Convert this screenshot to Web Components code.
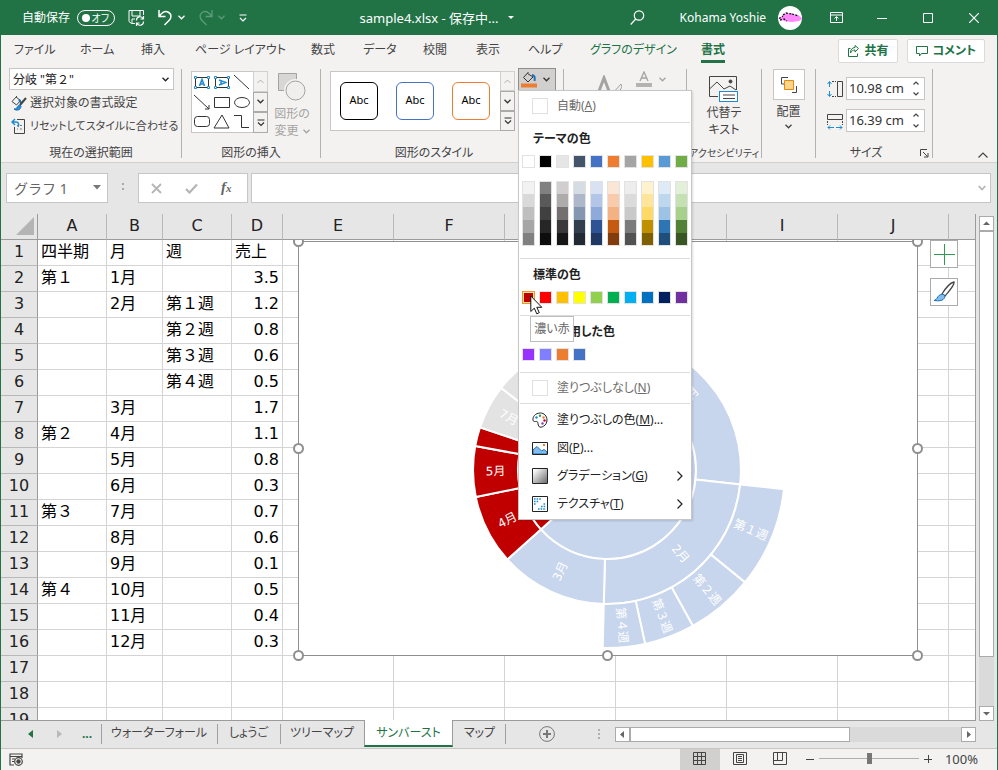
<!DOCTYPE html>
<html lang="ja">
<head>
<meta charset="utf-8">
<title>sample4.xlsx - Excel</title>
<style>
  html, body { height: 100%; margin: 0; }
  body {
    font-family: "Noto Sans", "Noto Sans CJK JP", sans-serif;
    font-size: 13px; line-height: 18px; color: #444;
    font-feature-settings: "palt";
    --green: #217346; --face: #f3f2f1; --band: #e6e6e6; --rule: #c6c6c6; --line: #9b9b9b;
    overflow: hidden;
  }
</style>
</head>
<body>
<excel-window></excel-window>

<script>
const BASE = `
  *, *::before, *::after { box-sizing: border-box; }
  button, input, select { font: inherit; font-feature-settings: inherit; color: inherit; margin: 0; padding: 0; border: 0; background: none; border-radius: 0; outline: 0; appearance: none; min-width: 0; }
  a { color: inherit; text-decoration: none; }
  svg { display: block; flex: none; fill: none; stroke: currentColor; }
`;
const component = (name, css, html, setup) => {
  const template = document.createElement('template');
  template.innerHTML = `<style>${BASE}${css}</style>${typeof html === 'string' ? html : ''}`;
  customElements.define(name, class extends HTMLElement {
    connectedCallback() {
      if (this.shadowRoot) return;
      const root = this.attachShadow({ mode: 'open' });
      root.append(template.content.cloneNode(true));
      if (typeof html === 'function') root.innerHTML += html(this);
      if (setup) setup(this, root);
    }
  });
};
const chevron = (w = 7) => `<svg width="${w}" height="5" viewBox="0 0 7 5" stroke-width="1.3"><path d="M.5 .8 3.5 3.8 6.5 .8"/></svg>`;

/* ---------- title bar ---------- */
component('title-bar', `
  :host { display: flex; align-items: center; height: 35px; flex: none; background: var(--green); color: #fff; padding-left: 21px; }
  .quick { display: flex; align-items: center; flex: 335; min-width: 0; font-size: 12px; }
  .quick > * { flex: none; }
  .switch { display: flex; align-items: center; width: 38px; height: 16px; border: 1px solid #fff; border-radius: 8px; margin: 0 13px 0 7px; padding: 0 5px 0 4px; font-size: 10px; line-height: 14px; justify-content: space-between; }
  .switch i { width: 8px; height: 8px; border-radius: 4px; background: #fff; }
  .off { color: #5d9b7a; }
  button { display: flex; align-items: center; justify-content: center; }
  .name { flex: 268; display: flex; align-items: center; gap: 9px; white-space: nowrap; font-feature-settings: normal; }
  .user { display: flex; align-items: center; gap: 12px; white-space: nowrap; margin-right: 11px; flex: none; font-size: 12px; }
  .user svg { stroke: none; }
  .win button { width: 46px; height: 35px; }
  .win { display: flex; flex: none; }
  .find { margin-right: 35px; flex: none; }
`, `
  <div class="quick">
    <span id="auto">自動保存</span>
    <button class="switch" role="switch" aria-checked="false" aria-labelledby="auto"><i></i>オフ</button>
    <button aria-label="保存"><svg width="17" height="17" viewBox="0 0 17 17"><path d="M7 14.500H3.500L1 12.500V1.500H15.500V6M4 1.500V7H12V1.500M4 14.500V10H7"/><path d="M8.500 11.500a3.500 3.500 0 0 1 6.500-2M15.500 7v3h-3M15.500 12.500a3.500 3.500 0 0 1-6.500 2M8.500 17v-3h3" stroke-width="1.200"/></svg></button>
    <button aria-label="元に戻す" style="margin-left:12px"><svg width="17" height="17" viewBox="0 0 17 17" stroke-width="1.500"><path d="M2 1V7.500H8.500M2.500 7C5 3.500 8 1.500 11 3c4 2 3.500 6 1 8.500L7.500 16"/></svg></button>
    <button aria-label="元に戻すの一覧" style="margin-left:4px">${chevron()}</button>
    <button class="off" aria-label="やり直し" style="margin-left:12px"><svg width="17" height="17" viewBox="0 0 17 17" stroke-width="1.300"><path d="M15 1V7.500H8.500M14.500 7C12 3.500 9 1.500 6 3c-4 2-3.500 6-1 8.500L9.500 16"/></svg></button>
    <button class="off" aria-label="やり直しの一覧" style="margin-left:4px">${chevron()}</button>
    <button aria-label="クイック アクセスのカスタマイズ" style="margin-left:14px"><svg width="8" height="8" viewBox="0 0 8 8" stroke-width="1.200"><path d="M.5 1H7.500M1 4l3 3 3-3"/></svg></button>
  </div>
  <div class="name"><span>sample4.xlsx - 保存中...</span><svg width="6" height="4" viewBox="0 0 6 4"><path d="M0 0H6L3 3z" fill="#fff" stroke="none"/></svg></div>
  <button class="find" aria-label="検索"><svg width="15" height="16" viewBox="0 0 15 16" stroke-width="1.200"><circle cx="9" cy="5.500" r="4.700"/><path d="M5.700 9 .7 14.500"/></svg></button>
  <div class="user"><span>Kohama Yoshie</span>
    <svg width="24" height="24" viewBox="0 0 24 24"><circle cx="12" cy="12" r="12" fill="#fff"/><path d="M1 12l4-2 1-2 3-1 5 1 5 1 4 2 1 2-3 2-7 1-8-1z" fill="#f8f"/><path d="M1 12.500l4-2.500M5 9l3-2 6 1M2 14l4-1 3 2M14 8l7 2" stroke="#111" stroke-width="1.300" stroke-dasharray="2 1.500"/></svg></div>
  <div class="win">
    <button aria-label="リボンの表示オプション"><svg width="13" height="11" viewBox="0 0 13 11"><path d="M.5 .5H12.500V10.500H.5zM.5 3H12.500M6.500 9V5M4.500 6.500l2-2 2 2"/></svg></button>
    <button aria-label="最小化"><svg width="10" height="10" viewBox="0 0 10 10"><path d="M0 5.500H10"/></svg></button>
    <button aria-label="最大化"><svg width="10" height="10" viewBox="0 0 10 10"><path d="M.5 .5H9.500V9.500H.5z"/></svg></button>
    <button aria-label="閉じる"><svg width="10" height="10" viewBox="0 0 10 10" stroke-width="1.200"><path d="M0 0 10 10M10 0 0 10"/></svg></button>
  </div>
`);

/* ---------- ribbon tabs ---------- */
component('ribbon-tabs', `
  :host { display: flex; justify-content: space-between; height: 31px; flex: none; background: var(--face); padding: 0 12px 0 13px; font-size: 12px; }
  nav { display: grid; grid-template-columns: 66px 61px 54px 116px 52px 60px 53px 52px 62px 111px auto; white-space: nowrap; align-items: start; }
  a { height: 28px; line-height: 29px; justify-self: start; }
  .ctx { color: var(--green); }
  .on { color: var(--green); font-weight: 700; border-bottom: 3px solid var(--green); }
  .acts { display: flex; gap: 9px; align-items: center; }
  button { display: flex; align-items: center; justify-content: center; gap: 5px; height: 24px; padding: 0 8px; background: #fff; border: 1px solid #dcdad8; border-radius: 2px; color: var(--green); font-weight: 700; white-space: nowrap; }
`, `
  <nav><a href="#">ファイル</a><a href="#">ホーム</a><a href="#">挿入</a><a href="#">ページ レイアウト</a><a href="#">数式</a><a href="#">データ</a><a href="#">校閲</a><a href="#">表示</a><a href="#">ヘルプ</a><a href="#" class="ctx">グラフのデザイン</a><a href="#" class="on">書式</a></nav>
  <div class="acts">
    <button><svg width="13" height="13" viewBox="0 0 13 13"><path d="M3.500 4.500H1.500V12.500H10.500V9.500M8 1.500l3.500 3L8 8V6C6 6 4.500 7 3.500 9 3.500 6 5 3.500 8 3.500z"/></svg>共有</button>
    <button><svg width="12" height="12" viewBox="0 0 12 12"><path d="M.5 1.500H11.500V8.500H5.500L3.500 11V8.500H.5z"/></svg>コメント</button>
  </div>
`);

/* ---------- ribbon ---------- */
component('ribbon-group', `
  :host { display: flex; flex-direction: column; flex: none; height: 89px; position: relative; border-right: 1px solid #b4b2b0; }
  .body { height: 76px; display: flex; }
  .label { position: relative; text-align: center; white-space: nowrap; line-height: 16px; height: 13px; padding-right: var(--shift, 0px); }
  :host([compact]) .label { font-size: 10px; }
  svg { position: absolute; right: 3px; top: 4px; }
`, host => `<div class="body"><slot></slot></div><div class="label">${host.getAttribute('label') || ''}${host.hasAttribute('launcher') ? '<svg width="9" height="9" viewBox="0 0 9 9" stroke-width="1"><path d="M.5 7V.5H7M3 3l4.500 4.500M8 4V8H4"/></svg>' : ''}</div>`);

component('gallery-scroll', `
  :host { display: grid; grid-template-rows: 1fr 1fr 1fr; width: 15px; color: #333; }
  button { display: grid; place-items: center; border: 1px solid #ababab; background: #f3f2f1; }
  .off { border-color: #d2d0ce; color: #b1b1b1; }
`, `
  <button class="off" aria-label="前へ"><svg width="7" height="5" viewBox="0 0 7 5"><path d="M.5 4 3.500 1 6.500 4"/></svg></button>
  <button aria-label="次へ">${chevron()}</button>
  <button aria-label="その他"><svg width="8" height="8" viewBox="0 0 8 8" stroke-width="1.200"><path d="M.5 1H7.500M1 3.500l3 3 3-3"/></svg></button>
`);

component('style-swatch', `
  :host { display: block; width: 38px; height: 38px; }
  button { width: 100%; height: 100%; border: 1px solid var(--edge); border-radius: 6px; background: #fff; color: #000; font-size: 11px; padding-bottom: 3px; }
`, `<button><slot></slot></button>`);

component('size-field', `
  :host { display: flex; align-items: center; gap: 3px; }
  .box { display: flex; width: 79px; height: 23px; background: #fff; border: 1px solid #c8c6c4; }
  input { flex: 1; width: 0; padding-left: 2px; color: #333; font-size: 13px; }
  .spin { display: flex; flex-direction: column; width: 16px; color: #444; }
  .spin button { flex: 1; display: grid; place-items: center; }
`, host => `<slot></slot><div class="box"><input aria-label="${host.getAttribute('name')}" value="${host.getAttribute('value')}"><div class="spin"><button aria-label="増やす"><svg width="6" height="4" viewBox="0 0 6 4" stroke-width="1.200"><path d="M.5 3.500 3 1 5.500 3.500"/></svg></button><button aria-label="減らす"><svg width="6" height="4" viewBox="0 0 6 4" stroke-width="1.200"><path d="M.5 .5 3 3 5.500 .5"/></svg></button></div></div>`);

component('ribbon-bar', `
  :host { display: flex; height: 97px; flex: none; padding-top: 3px; background: var(--face); border-bottom: 1px solid #d2d0ce; font-size: 12px; line-height: 17px; }
  button { white-space: nowrap; }
  .sel { display: flex; flex-direction: column; padding-left: 8px; flex: 1; }
  .combo { display: flex; align-items: center; width: 165px; height: 22px; margin-top: -1px; background: #fff; border: 1px solid #c8c6c4; color: #222; font-feature-settings: normal; }
  .combo select { flex: 1; height: 20px; padding-left: 3px; }
  .combo svg { margin-left: -12px; margin-right: 4px; pointer-events: none; }
  .cmd { display: flex; align-items: center; gap: 3px; height: 23px; padding-left: 2px; }
  .cmd:last-child { font-size: 11px; }
  .cmd:nth-child(2) { margin-top: 1px; }
  .shapes { display: flex; margin: 2px 0 0 9px; height: 62px; background: #fff; border: 1px solid #c8c6c4; border-right: 0; }
  .shapes gallery-scroll, .styles gallery-scroll { margin: -1px 0; }
  .tall { display: flex; flex-direction: column; align-items: center; }
  .tall .v { margin-top: 3px; }
  .v svg { display: inline-block; vertical-align: middle; margin-left: 4px; }
  .styles { display: flex; margin: 2px 0 0 9px; height: 60px; background: #fff; border: 1px solid #c8c6c4; border-right: 0; }
  .styles .row { display: flex; gap: 18px; padding: 10px 10px 0 9px; }
  .fill { position: relative; margin: -1px 0 0 3px; height: 23px; }
  .fill > button { display: flex; align-items: center; gap: 5px; width: 38px; height: 23px; padding-left: 2px; background: #d2d0ce; border: 1px solid #8f8d8b; color: #333; }
  fill-menu { position: absolute; left: 0; top: 22px; z-index: 20; }
  .sizes { display: flex; flex-direction: column; gap: 9px; padding: 8px 0 0 11px; }
  .arr { display: grid; place-items: center; width: 32px; height: 31px; background: #fff; border: 1px solid #c8c6c4; }
  .rest { flex: 1; display: flex; justify-content: flex-end; align-items: flex-end; padding: 0 9px 4px 0; }
  .dim { color: #a5a3a1; }
`, `
  <ribbon-group label="現在の選択範囲" style="width:181px">
    <div class="sel">
      <div class="combo"><select aria-label="グラフ要素"><option>分岐 "第２"</option></select>${chevron()}</div>
      <button class="cmd"><svg width="16" height="16" viewBox="0 0 16 16"><path d="M6 1 1 6.500 5.500 10 9.500 5.500 5 2"/><path d="M8 4.500l2.500 4" stroke="#1e6fb8" stroke-width="2"/><path d="M15 3 9 10" stroke-width="2"/><path d="M9 10c-3 0-2 4-6 4 2 2 7 1.500 7-3z" fill="#2a8dd4" stroke="#1e6fb8"/></svg>選択対象の書式設定</button>
      <button class="cmd"><svg width="16" height="16" viewBox="0 0 16 16"><path d="M6 1.500H13.500V15.500H3.500V9"/><path d="M6 7.500h1M9 7.500h2M6 11h1M9 11h2" stroke="#777"/><path d="M4 1 1 4 4 7M1 4H5C8 4 8 7 7 9" stroke="#1e8bd0" stroke-width="1.500"/></svg>リセットしてスタイルに合わせる</button>
    </div>
  </ribbon-group>
  <ribbon-group label="図形の挿入" style="width:139px">
    <div class="shapes">
      <svg width="61" height="60" viewBox="0 0 61 60" style="color:#333"><path d="M3.500 5.500H16.500V15.500H3.500zM23.500 5.500H36.500V15.500H23.500zM42 3 57 17M2 23 17 37M17 33v4h-4M22.500 25.500H37.500V35.500H22.500zM22 56 30 43 37 56zM42 43.500H49.500V55.500H57"/><ellipse cx="50" cy="30.500" rx="7.500" ry="5"/><rect x="2.500" y="44.500" width="15" height="10" rx="3"/><g fill="#fff" stroke="#1e8bd0"><path d="M2.500 4.500h2v2h-2zM15.500 4.500h2v2h-2zM2.500 14.500h2v2h-2zM15.500 14.500h2v2h-2zM22.500 4.500h2v2h-2zM35.500 4.500h2v2h-2zM22.500 14.500h2v2h-2zM35.500 14.500h2v2h-2z"/></g><path d="M7.500 14 10 7.500 12.500 14M8.500 12h3M27 8 33.500 10.500 27 13M29 9v3" stroke="#1e8bd0" stroke-width="1.600"/></svg>
      <gallery-scroll></gallery-scroll>
    </div>
    <button class="tall dim" style="width:48px"><svg width="30" height="30" viewBox="0 0 30 30" style="margin-top:3px"><path d="M1.500 1.500H19.500V18.500H1.500z" fill="#d8d6d4"/><circle cx="18.500" cy="18.500" r="10.500" stroke="#f3f2f1" stroke-width="2"/><circle cx="18.500" cy="18.500" r="9.500" fill="#f0efee"/></svg><span class="v">図形の<br>変更${chevron()}</span></button>
  </ribbon-group>
  <ribbon-group label="図形のスタイル" style="width:243px;--shift:16px">
    <div class="styles">
      <div class="row"><style-swatch style="--edge:#000">Abc</style-swatch><style-swatch style="--edge:#4472c4">Abc</style-swatch><style-swatch style="--edge:#ed7d31">Abc</style-swatch></div>
      <gallery-scroll></gallery-scroll>
    </div>
    <div class="fill">
      <button aria-label="図形の塗りつぶし" aria-expanded="true"><svg width="17" height="17" viewBox="0 0 17 17"><path d="M7.500 1 2.500 6.500 7 11 12 6 6.500 2.500"/><path d="M11 4c3 0 3 3 2.500 6" stroke="#1e6fb8" stroke-width="2"/><path d="M0 12.500H16V16.500H0z" fill="#ed7d31" stroke="none"/></svg>${chevron()}</button>
      <fill-menu></fill-menu>
    </div>
  </ribbon-group>
  <ribbon-group label="" style="width:123px">
    <svg width="27" height="31" viewBox="0 0 27 31" class="dim" style="margin:6px 0 0 31px"><path d="M1 24 9 3 17 24M4 17h10" stroke-width="3"/><path d="M26 9 16 20l-2 6 5-1 8-13z" fill="#eee"/></svg>
    <svg width="16" height="16" viewBox="0 0 16 16" class="dim" style="margin:2px 0 0 14px"><path d="M4 10 8 1 12 10M5.500 7h5" stroke-width="1.300"/><path d="M0 12H16V16H0z" fill="#b5b3b1" stroke="none"/></svg>
    <span class="dim" style="margin:8px 0 0 7px">${chevron()}</span>
  </ribbon-group>
  <ribbon-group label="アクセシビリティ" compact style="width:75px">
    <button class="tall" style="flex:1"><svg width="32" height="28" viewBox="0 0 32 28" style="margin-top:6px"><path d="M10 21.500H1.500V1.500H28.500V15M2 13.500 9 7l7 7 6-3 6 4" /><circle cx="22.500" cy="6.500" r="1.500" fill="#444"/><rect x="11.500" y="16.500" width="18" height="10" fill="#fff" stroke="#1e8bd0"/><path d="M15 20h12M15 23.500h12"/></svg><span class="v" style="margin-top:1px">代替テ<br>キスト</span></button>
  </ribbon-group>
  <ribbon-group label="" style="width:54px">
    <button class="tall" style="flex:1"><span class="arr"><svg width="18" height="18" viewBox="0 0 18 18"><path d="M6 8H1.500V1.500H8M12 16.500H16.500V10"/><path d="M4.500 4.500h9v9h-9z" fill="#fbd58b" stroke="#e8890c"/></svg></span><span class="v">配置</span><span style="margin-top:4px">${chevron()}</span></button>
  </ribbon-group>
  <ribbon-group label="サイズ" launcher style="width:117px;--shift:16px">
    <div class="sizes">
      <size-field name="高さ" value="10.98 cm"><svg width="16" height="18" viewBox="0 0 16 18"><path d="M10.500 1.500H15.500V16.500H10.500z"/><path d="M5 1.500h4M5 16.500h4" stroke-dasharray="2 1"/><path d="M2.500 2V7M2.500 11V16M.5 4l2-2.500 2 2.500M.5 14l2 2.500 2-2.500" stroke="#1e8bd0"/></svg></size-field>
      <size-field name="幅" value="16.39 cm"><svg width="16" height="18" viewBox="0 0 16 18"><path d="M.5 2.500H15.500V7.500H.5z"/><path d="M.5 9v4M15.500 9v4" stroke-dasharray="2 1"/><path d="M1 15.500H7M9 15.500H15M3 13.500l-2 2 2 2M13 13.500l2 2-2 2" stroke="#1e8bd0"/></svg></size-field>
    </div>
  </ribbon-group>
  <div class="rest"><button aria-label="リボンを折りたたむ"><svg width="10" height="6" viewBox="0 0 10 6" stroke-width="1.200"><path d="M.5 5.500 5 1 9.500 5.500"/></svg></button></div>
`);

/* ---------- fill colour menu ---------- */
component('color-row', `
  :host { display: flex; gap: 4px; padding-left: 3px; }
  .col { display: flex; flex-direction: column; width: 13px; border: 1px solid #e2e2e2; }
  .col.hot { border-color: #f29436; box-shadow: inset 0 0 0 1px #ffe294; }
  button { flex: none; height: 13px; }
  button:first-child, button:last-child { height: 12px; }
  button:only-child { height: 11px; }
  .hot button:only-child { margin: 1px; height: 9px; }
`, host => host.getAttribute('colors').split(' ').map((c, i) => `<div class="col ${host.hasAttribute('hot') && !i ? 'hot' : ''}">${c.split('/').map(v => `<button aria-label="#${v}" style="background:#${v}"></button>`).join('')}</div>`).join(''));

component('menu-item', `
  :host { display: block; }
  button { display: flex; align-items: center; width: 100%; height: 28px; padding: 0 8px 0 13px; gap: 9px; text-align: left; font-size: 12px; white-space: nowrap; color: #222; }
  .t { flex: 1; }
  :host([dim]) button { color: #6d6b69; }
  .none { width: 16px; height: 16px; border: 1px solid #e0e0e0; background: #fff; }
`, host => `<button><slot name="icon"><i class="none"></i></slot><span class="t"><slot></slot></span>${host.hasAttribute('sub') ? '<svg width="6" height="10" viewBox="0 0 6 10" stroke-width="1.200"><path d="M.5 .5 5 5 .5 9.500"/></svg>' : ''}</button>`);

component('fill-menu', `
  :host { display: block; width: 174px; background: #fff; border: 1px solid #c6c6c6; color: #222; font-size: 12px; line-height: 16px; box-shadow: 1px 1px 2px #0002; }
  hr { border: 0; border-top: 1px solid #dcdcdc; margin: 0 1px; }
  h2 { margin: 0; padding-left: 14px; font-size: 12px; font-weight: 700; height: 32px; line-height: 31px; white-space: nowrap; }
  .auto { padding: 1px 0 2px; }
  .ramp { margin-top: 13px; }
  .theme { padding-bottom: 12px; }
  .std { padding-bottom: 11px; position: relative; }
  .more { padding: 2px 0 1px; }
  .tip { position: absolute; left: 11px; top: 57px; width: 44px; height: 26px; border: 1px solid #bebebe; background: #fff; color: #666; text-align: center; line-height: 24px; z-index: 2; white-space: nowrap; }
  .cursor { position: absolute; left: 11px; top: 36px; z-index: 3; }
`, `
  <menu-item dim class="auto">自動(<u>A</u>)</menu-item><hr>
  <div class="theme"><h2>テーマの色</h2>
    <color-row colors="ffffff 000000 e7e6e6 44546a 4472c4 ed7d31 a5a5a5 ffc000 5b9bd5 70ad47"></color-row>
    <color-row class="ramp" colors="f2f2f2/d9d9d9/bfbfbf/a6a6a6/808080 808080/595959/404040/262626/0d0d0d d0cece/aeabab/757070/3a3838/171616 d6dce4/adb9ca/8496b0/323f4f/222a35 d9e2f3/b4c6e7/8eaadb/2f5496/1f3864 fbe5d5/f7cbac/f4b183/c55a11/833c0b ededed/dbdbdb/c9c9c9/7b7b7b/525252 fff2cc/fee599/ffd965/bf9000/7f6000 deebf6/bdd7ee/9cc3e5/2e75b5/1e4e79 e2efd9/c5e0b3/a8d08d/538135/375623"></color-row>
  </div><hr>
  <div class="std"><h2>標準の色</h2>
    <color-row hot colors="c00000 ff0000 ffc000 ffff00 92d050 00b050 00b0f0 0070c0 002060 7030a0"></color-row>
    <div class="tip" role="tooltip">濃い赤</div>
    <svg class="cursor" width="13" height="20" viewBox="0 0 13 20"><path d="M.8 1V16.500L4.300 13.200 6.800 18.800 9.300 17.700 6.800 12.300H11.800z" fill="#fff" stroke="#111"/></svg>
  </div><hr>
  <div style="padding-bottom:11px"><h2>最近使用した色</h2>
    <color-row colors="9933ff 7f7fff ed7d31 4472c4"></color-row>
  </div><hr>
  <menu-item dim style="padding:1px 0">塗りつぶしなし(<u>N</u>)</menu-item><hr>
  <div class="more">
  <menu-item><svg slot="icon" width="16" height="16" viewBox="0 0 16 16"><path d="M8.500 1C3 1 .5 5 1 8c.5 2.500 2.500 1 4 1.500s.5 3 2 5 8-.5 8-6.500c0-4-3-7-6.500-7z"/><g stroke="none"><circle cx="4.500" cy="5.500" r="1.200" fill="#1e8bd0"/><circle cx="8" cy="3.800" r="1.200" fill="#2a9d4f"/><circle cx="11.500" cy="5.500" r="1.200" fill="#ed7d31"/><circle cx="12.500" cy="8.500" r="1.200" fill="#c03"/><circle cx="10.500" cy="11.500" r="1.200" fill="#8a3fb0"/></g></svg>塗りつぶしの色(<u>M</u>)...</menu-item>
  <menu-item><svg slot="icon" width="16" height="13" viewBox="0 0 16 13"><path d="M1 8 5 4.500 9.500 9 12 7.500 15 10V12H1z" fill="#83beec" stroke="#1e6fb8"/><path d="M11 2h2v2h-2z" fill="#ed7d31" stroke="none"/><path d="M.5 .5H15.500V12.500H.5z"/></svg>図(<u>P</u>)...</menu-item>
  <menu-item sub><svg slot="icon" width="16" height="16" viewBox="0 0 16 16"><defs><linearGradient id="g" x2="1" y2="1"><stop offset=".1" stop-color="#fff"/><stop offset=".9" stop-color="#777"/></linearGradient></defs><path d="M.5 .5H15.500V15.500H.5z" fill="url(#g)"/></svg>グラデーション(<u>G</u>)</menu-item>
  <menu-item sub><svg slot="icon" width="16" height="16" viewBox="0 0 16 16"><path d="M.5 .5H15.500V15.500H.5z"/><path d="M2 3h7M2 5.500h5M2 8h2M11.500 8h2.500M9 10.500h5M6 13h8" stroke="#1e8bd0" stroke-width="1.600" stroke-dasharray="1.600 1"/></svg>テクスチャ(<u>T</u>)</menu-item>
  </div>
`);

/* ---------- formula bar ---------- */
component('formula-bar', `
  :host { display: flex; height: 51px; flex: none; padding: 10px 6px 11px 5px; background: var(--band); font-feature-settings: normal; }
  .box { display: flex; align-items: center; background: #fff; border: 1px solid #c6c6c6; }
  .nm { width: 102px; padding: 2px 6px 0; color: #666; }
  .nm input { flex: 1; width: 0; font-size: 14px; padding-left: 1px; }
  .nm button { margin-bottom: 4px; }
  .dots { width: 30px; display: grid; place-items: center; }
  .fx { width: 110px; justify-content: space-around; padding: 0 4px 0 0; margin-right: 3px; color: #b5b5b5; }
  .in { flex: 1; padding-right: 4px; color: #b5b5b5; }
  .in input { flex: 1; }
  .fx .f { font: italic 700 15px/15px "Liberation Serif", serif; color: #666; }
  .fx small { font-size: 11px; }
`, `
  <div class="box nm"><input aria-label="名前ボックス" value="グラフ 1"><button aria-label="名前の一覧"><svg width="8" height="5" viewBox="0 0 8 5"><path d="M0 0H8L4 4.500z" fill="#777" stroke="none"/></svg></button></div>
  <div class="dots"><svg width="2" height="12" viewBox="0 0 2 12"><path d="M1 1v10" stroke="#aaa" stroke-width="2" stroke-dasharray="2 3"/></svg></div>
  <div class="box fx"><button aria-label="キャンセル"><svg width="11" height="11" viewBox="0 0 11 11" stroke-width="1.800"><path d="M1 1 10 10M10 1 1 10"/></svg></button><button aria-label="入力"><svg width="13" height="11" viewBox="0 0 13 11" stroke-width="2.200"><path d="M1 6 4.500 9.500 12 1.500"/></svg></button><button class="f" aria-label="関数の挿入">f<small>x</small></button></div>
  <div class="box in"><input aria-label="数式バー"><svg width="8" height="6" viewBox="0 0 8 6" stroke-width="1.700"><path d="M.7 1 4 4.500 7.300 1"/></svg></div>
`);

/* ---------- scroll bar ---------- */
component('scroll-bar', `
  :host { display: flex; background: #dadada; --thumb: 220px; height: 15px; }
  :host([vertical]) { flex-direction: column; width: 15px; height: auto; }
  button { display: grid; place-items: center; flex: none; width: 15px; height: 15px; background: #fff; border: 1px solid #ababab; color: #666; }
  i { flex: 0 0 var(--thumb); background: #fff; border: 1px solid #ababab; }
  .gap { flex: 1; }
  svg { fill: currentColor; stroke: none; }
`, host => {
  const v = host.hasAttribute('vertical');
  return `<button aria-label="${v ? '上' : '左'}へ"><svg width="7" height="7" viewBox="0 0 7 7"><path d="${v ? 'M0 5H7L3.500 1.500z' : 'M5 0V7L1 3.500z'}"/></svg></button><i></i><span class="gap"></span><button aria-label="${v ? '下' : '右'}へ"><svg width="7" height="7" viewBox="0 0 7 7"><path d="${v ? 'M0 2H7L3.500 5.500z' : 'M2 0V7L6 3.500z'}"/></svg></button>`;
});

/* ---------- sunburst chart ---------- */
const months = [['1月', 3.5, '#c7d5ed'], ['2月', 3.1, '#c7d5ed'], ['3月', 1.7, '#c7d5ed'], ['4月', 1.1, '#c00000'], ['5月', .8, '#c00000'], ['', .3, '#c00000'], ['7月', .7, '#e3e3e3'], ['', .6, '#e3e3e3'], ['', .1, '#e3e3e3'], ['', .5, '#fdecc4'], ['', .4, '#fdecc4'], ['', .3, '#fdecc4']];
const quarters = [['', 8.3, '#c7d5ed'], ['', 2.2, '#c00000'], ['', 1.4, '#e3e3e3'], ['', 1.2, '#fdecc4']];
const weeks = [['第１週', 1.2, '#c7d5ed'], ['第２週', .8, '#c7d5ed'], ['第３週', .6, '#c7d5ed'], ['第４週', .5, '#c7d5ed']];
const CX = 607, CY = 470, TOTAL = 13.1;
const point = (r, deg) => [CX + r * Math.sin(deg * Math.PI / 180), CY - r * Math.cos(deg * Math.PI / 180)].map(n => Math.round(n * 10) / 10);
const ring = (items, r0, r1, start) => {
  let sum = start, shapes = '', labels = '';
  for (const [text, value, fill] of items) {
    const a = sum / TOTAL * 360, b = (sum + value) / TOTAL * 360, mid = (a + b) / 2, big = b - a > 180 ? 1 : 0;
    sum += value;
    shapes += `<path fill="${fill}" d="M${point(r0, a)}L${point(r1, a)}A${r1} ${r1} 0 ${big} 1 ${point(r1, b)}L${point(r0, b)}A${r0} ${r0} 0 ${big} 0 ${point(r0, a)}z"/>`;
    const [x, y] = point((r0 + r1) / 2, mid);
    if (text) labels += `<text x="${x}" y="${y}" dy="4" transform="rotate(${Math.round(mid > 180 ? mid + 90 : mid - 90)} ${x} ${y})">${text}</text>`;
  }
  return shapes + labels;
};
component('sunburst-chart', `
  :host { display: block; width: 632px; height: 422px; }
  svg { overflow: hidden; }
  text { font-size: 12px; fill: #fff; stroke: none; text-anchor: middle; }
`, () => `<svg width="632" height="422" viewBox="292 240 632 422" role="img" aria-label="サンバースト グラフ">
  <path d="M298.500 241.500H917.500V655.500H298.500z" fill="#fff" stroke="#8f8f8f"/>
  <g stroke="#fff" stroke-width="2">${ring(quarters, 42, 89, 0)}${ring(months, 89, 134, 0)}${ring(weeks, 134, 178, 3.5)}</g>
  <g fill="#fff" stroke="#8f8f8f" stroke-width="2">${[[298, 241], [607, 241], [917, 241], [298, 448], [917, 448], [298, 655], [607, 655], [917, 655]].map(([x, y]) => `<circle cx="${x + .5}" cy="${y + .5}" r="4.500"/>`).join('')}</g></svg>`);

/* ---------- worksheet ---------- */
const rows = [['四半期', '月', '週', '売上'], ['第１', '1月', '', '3.5'], ['', '2月', '第１週', '1.2'], ['', '', '第２週', '0.8'], ['', '', '第３週', '0.6'], ['', '', '第４週', '0.5'], ['', '3月', '', '1.7'], ['第２', '4月', '', '1.1'], ['', '5月', '', '0.8'], ['', '6月', '', '0.3'], ['第３', '7月', '', '0.7'], ['', '8月', '', '0.6'], ['', '9月', '', '0.1'], ['第４', '10月', '', '0.5'], ['', '11月', '', '0.4'], ['', '12月', '', '0.3'], [], [], []];
component('work-sheet', `
  :host { display: flex; flex: 1; min-height: 0; background: var(--band); font: 16px/23px "DejaVu Sans", "Noto Sans CJK JP", sans-serif; font-feature-settings: normal; color: #000; }
  .sheet { position: relative; flex: 1; overflow: hidden; border-right: 1px solid var(--line); border-bottom: 1px solid var(--line); }
  table { table-layout: fixed; width: 100%; border-collapse: separate; border-spacing: 0; background: #fff; }
  tr { height: 26px; }
  th, td { height: 26px; padding: 0 3px 2px; overflow: hidden; white-space: nowrap; font-weight: 400; border-right: 1px solid #d4d4d4; border-bottom: 1px solid #d4d4d4; text-align: left; }
  th { background: var(--band); text-align: center; color: #222; padding: 0 0 2px; border-color: #b9b9b9; }
  thead th { border-bottom-color: var(--line); }
  th:first-child { border-right-color: var(--line); }
  tr > :last-child { border-right: 0; }
  td:nth-child(5) { text-align: right; }
  tbody tr:first-child td:nth-child(5) { text-align: left; }
  thead svg { margin: 0 3px 0 auto; }
  sunburst-chart { position: absolute; left: 291px; top: 26px; }
  .side { position: absolute; left: 929px; top: 26px; display: grid; gap: 10px; }
  .side button { display: grid; place-items: center; width: 28px; height: 28px; background: #fff; border: 1px solid #ababab; }
  .plus { color: #2e9b4f; }
  scroll-bar { margin: 2px 3px 0; --thumb: 426px; }
`, () => `
  <div class="sheet">
    <table><colgroup><col style="width:37px"><col style="width:69px"><col style="width:56px"><col style="width:69px"><col style="width:51px">${'<col style="width:111px">'.repeat(6)}<col></colgroup>
    <thead><tr><th aria-label="すべて選択"><svg width="18" height="18" viewBox="0 0 18 18"><path d="M18 0V18H0z" fill="#b4b4b4" stroke="none"/></svg></th>${[...'ABCDEFGHIJ'].map(c => `<th>${c}</th>`).join('')}<th></th></tr></thead>
    <tbody>${rows.map((r, i) => `<tr><th>${i + 1}</th>${Array.from({ length: 11 }, (_, k) => `<td>${r[k] || ''}</td>`).join('')}</tr>`).join('')}</tbody></table>
    <sunburst-chart></sunburst-chart>
    <div class="side">
      <button aria-label="グラフ要素"><svg class="plus" width="22" height="22" viewBox="0 0 22 22"><path d="M11.500 1V22M1 11.500H22"/></svg></button>
      <button aria-label="グラフ スタイル"><svg width="22" height="22" viewBox="0 0 22 22"><path d="M9 13C12 8 17 2 21 1c1 3-5 9-9 14z" fill="#fff" stroke="#444" stroke-width="1.300"/><path d="M11.500 14c1 3-1 7-10.500 5.500 3.500-1 3-3.500 5-5 2-1.500 4-1.500 5.500-.5z" fill="#83beec" stroke="#1e6fb8"/></svg></button>
    </div>
  </div>
  <scroll-bar vertical></scroll-bar>
`);

/* ---------- sheet tabs ---------- */
component('sheet-tabs', `
  :host { display: flex; height: 27px; flex: none; background: var(--band); font-size: 12px; line-height: 24px; }
  .nav { display: flex; align-items: center; width: 100px; height: 25px; padding-left: 27px; color: #b9b9b9; gap: 24px; }
  .nav button { flex: none; display: block; }
  .nav .go { color: var(--green); }
  .nav .more { margin-left: -4px; color: var(--green); font-weight: 700; line-height: 18px; }
  nav { display: grid; grid-template-columns: 116px 63px 84px 89px 53px; height: 24px; white-space: nowrap; text-align: center; }
  nav a { position: relative; color: #444; }
  nav a:not(.on)::before { content: ""; position: absolute; left: 0; top: 3px; height: 20px; border-left: 1px solid #a0a0a0; }
  nav a:last-child::before { content: none !important; }
  nav a:last-child::after { content: ""; position: absolute; right: 0; top: 3px; height: 20px; border-right: 1px solid #a0a0a0; }
  nav .on { margin-top: -1px; background: #fff; color: var(--green); border: 1px solid var(--line); border-top: 0; border-bottom: 2px solid var(--green); line-height: 25px; }
  .add { width: 82px; display: grid; place-items: center; height: 25px; color: #777; }
  .dots { width: 22px; height: 25px; display: grid; place-items: center; }
  scroll-bar { flex: 1; margin: 6px 21px 0 5px; }
`, `
  <div class="nav"><button class="go" aria-label="前のシート"><svg width="5" height="8" viewBox="0 0 5 8"><path d="M5 0V8L0 4z" fill="currentColor" stroke="none"/></svg></button><button aria-label="次のシート"><svg width="5" height="8" viewBox="0 0 5 8"><path d="M0 0V8L5 4z" fill="currentColor" stroke="none"/></svg></button><button class="more">...</button></div>
  <nav><a href="#">ウォーターフォール</a><a href="#">しょうご</a><a href="#">ツリーマップ</a><a href="#" class="on">サンバースト</a><a href="#">マップ</a></nav>
  <button class="add" aria-label="新しいシート"><svg width="16" height="16" viewBox="0 0 16 16"><circle cx="8" cy="8" r="7.400"/><path d="M8 4v8M4 8h8" stroke-width="2"/></svg></button>
  <div class="dots"><svg width="2" height="12" viewBox="0 0 2 12"><path d="M1 1v10" stroke="#b0b0b0" stroke-width="2" stroke-dasharray="2 2"/></svg></div>
  <scroll-bar></scroll-bar>
`);

/* ---------- status bar ---------- */
component('status-bar', `
  :host { display: flex; align-items: center; height: 22px; flex: none; background: var(--face); border-top: 1px solid #c6c6c6; color: #444; padding: 0 19px 0 8px; }
  .views { display: flex; margin-left: auto; }
  .views button { display: grid; place-items: center; width: 40px; height: 21px; padding-bottom: 2px; }
  .views .on { background: #d2d0ce; }
  .zoom { display: flex; align-items: center; gap: 5px; padding: 0 0 2px 6px; }
  input { width: 100px; height: 12px; background: linear-gradient(#b0aeac, #b0aeac) center / 100% 1px no-repeat; }
  input::-webkit-slider-thumb { appearance: none; width: 5px; height: 11px; background: #777; }
  .pct { padding-left: 8px; line-height: 18px; }
`, `
  <button aria-label="マクロの記録"><svg width="15" height="13" viewBox="0 0 15 13" stroke-width="1.200"><path d="M5 12H1V1H13V5M1 3.500H13M3 6h3M3 8.500h2"/><circle cx="9.500" cy="8.500" r="3.800"/><circle cx="9.500" cy="8.500" r="1.600" fill="#444"/></svg></button>
  <div class="views">
    <button class="on" aria-label="標準"><svg width="13" height="13" viewBox="0 0 13 13"><path d="M.5 .5H12.500V12.500H.5zM.5 4.500H12.500M.5 8.500H12.500M4.500 .5V12.500M8.500 .5V12.500"/></svg></button>
    <button aria-label="ページ レイアウト"><svg width="14" height="13" viewBox="0 0 14 13"><path d="M.5 .5H13.500V12.500H.5zM3.500 2.500H10.500V10.500H3.500zM5 4.500H9M5 6.500H9M5 8.500H9"/></svg></button>
    <button aria-label="改ページ プレビュー"><svg width="14" height="13" viewBox="0 0 14 13"><path d="M.5 .5H13.500V12.500H.5zM4.500 .5V8.500M9.500 .5V8.500M.5 8.500H9.500"/></svg></button>
  </div>
  <div class="zoom"><button aria-label="縮小"><svg width="8" height="8" viewBox="0 0 8 8"><path d="M0 4.500H8"/></svg></button><input type="range" aria-label="ズーム" value="51"><button aria-label="拡大"><svg width="8" height="8" viewBox="0 0 8 8"><path d="M0 4.500H8M4.500 0V8"/></svg></button><span class="pct">100%</span></div>
`);

component('excel-window', `
  :host { display: flex; flex-direction: column; height: 100vh; border: solid var(--green); border-width: 0 1px 1px; background: var(--band); }
`, `<title-bar></title-bar><ribbon-tabs></ribbon-tabs><ribbon-bar></ribbon-bar><formula-bar></formula-bar><work-sheet></work-sheet><sheet-tabs></sheet-tabs><status-bar></status-bar>`);
</script>
</body>
</html>
